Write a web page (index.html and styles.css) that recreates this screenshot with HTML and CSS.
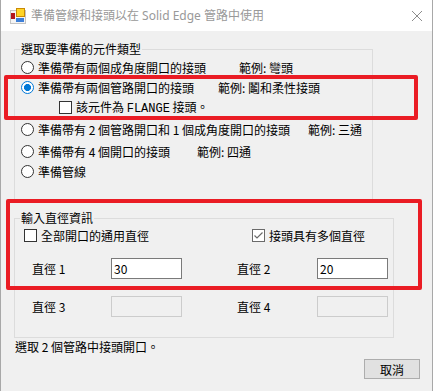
FILE: index.html
```html
<!DOCTYPE html>
<html>
<head>
    <meta charset="utf-8">
    <title>準備管線和接頭以在 Solid Edge 管路中使用</title>
    <link rel="stylesheet" href="styles.css">
</head>
<body>
    <div class="window">
        <div class="titlebar">
            <svg class="app-icon" width="16" height="16" viewBox="0 0 16 16">
                <rect x="0.5" y="2.5" width="15" height="13" fill="#f4f4f4" stroke="#c4c4c4"/>
                <rect x="1" y="5" width="4" height="6" fill="#b3161d"/>
                <rect x="6.5" y="0.5" width="8" height="8" fill="#ffd427" stroke="#c98a05"/>
                <rect x="6" y="10" width="8" height="4" fill="#3d7fd8"/>
            </svg>
            <span class="title">準備管線和接頭以在 Solid Edge 管路中使用</span>
            <svg class="close" width="10" height="10" viewBox="0 0 10 10">
                <path d="M0 0 L10 10 M10 0 L0 10" stroke="#8c8c8c" stroke-width="1"/>
            </svg>
        </div>

        <div class="client">
            <fieldset class="group group-type">
                <legend>選取要準備的元件類型</legend>

                <div class="option">
                    <span class="radio"></span>
                    <span class="label w-angle">準備帶有兩個成角度開口的接頭</span>
                    <span>範例: 彎頭</span>
                </div>
                <div class="option">
                    <span class="radio on"></span>
                    <span class="label w-inline">準備帶有兩個管路開口的接頭</span>
                    <span>範例: 鬮和柔性接頭</span>
                </div>
                <div class="option sub">
                    <span class="check"></span>
                    <span>該元件為 <span class="mono">FLANGE</span> 接頭。</span>
                </div>
                <div class="option spaced">
                    <span class="radio"></span>
                    <span class="label w-tee">準備帶有 2 個管路開口和 1 個成角度開口的接頭</span>
                    <span>範例: 三通</span>
                </div>
                <div class="option spaced">
                    <span class="radio"></span>
                    <span class="label w-cross">準備帶有 4 個開口的接頭</span>
                    <span>範例: 四通</span>
                </div>
                <div class="option">
                    <span class="radio"></span>
                    <span>準備管線</span>
                </div>
            </fieldset>

            <fieldset class="group group-dia">
                <legend>輸入直徑資訊</legend>

                <div class="check-row">
                    <div class="item first">
                        <span class="check"></span>
                        <span>全部開口的通用直徑</span>
                    </div>
                    <div class="item">
                        <span class="check on">
                            <svg width="11" height="11" viewBox="0 0 11 11">
                                <path d="M1.5 5.5 L4 8 L9.5 2.5" fill="none" stroke="#6a6a6a" stroke-width="1.2"/>
                            </svg>
                        </span>
                        <span>接頭具有多個直徑</span>
                    </div>
                </div>

                <div class="dia-row">
                    <span class="dia-label">直徑 1</span>
                    <input class="dia-input" type="text" value="30">
                    <span class="dia-label second">直徑 2</span>
                    <input class="dia-input" type="text" value="20">
                </div>
                <div class="dia-row">
                    <span class="dia-label">直徑 3</span>
                    <input class="dia-input" type="text" disabled>
                    <span class="dia-label second">直徑 4</span>
                    <input class="dia-input" type="text" disabled>
                </div>
            </fieldset>

            <p class="status">選取 2 個管路中接頭開口。</p>

            <div class="actions">
                <button type="button">取消</button>
            </div>
        </div>

        <!-- annotation frames -->
        <div class="mark mark-type"></div>
        <div class="mark mark-dia"></div>
    </div>
</body>
</html>
```

FILE: styles.css
```css
* {
    box-sizing: border-box;
}

body {
    margin: 0;
    font-family: "Noto Sans CJK TC", "Noto Sans", sans-serif;
    font-size: 12px;
    color: #000;
    background-color: #f0f0f0;
}

.window {
    position: relative;
    width: 433px;
    height: 391px;
    background-color: #f0f0f0;
    border-left: 1px solid #a8a8a8;
    border-right: 1px solid #a8a8a8;
}

.titlebar {
    display: flex;
    align-items: center;
    height: 31px;
    padding: 0 10px 0 9px;
    background-color: #fff;
}

.app-icon {
    flex: none;
}

.title {
    flex: 1;
    margin-left: 5px;
    color: #999;
    font-family: "Noto Sans", "Noto Sans CJK TC", sans-serif;
    font-size: 12px;
    line-height: 16px;
}

.close {
    flex: none;
}

.client {
    padding: 0 12px 0 13px;
}

.group {
    margin: 0;
    padding: 0;
    min-width: 0;
    border: 1px solid #dcdcdc;
}

.group legend {
    margin-left: 5px;
    padding: 0 1px;
    line-height: 16px;
}

.group-type {
    width: 359px;
    margin-top: 10px;
    padding: 0 0 19px;
}

.group-dia {
    width: 380px;
    margin-top: 9px;
    padding: 0 0 20px;
}

.option {
    display: flex;
    align-items: center;
    height: 20px;
    padding-left: 6px;
    white-space: nowrap;
}

.option.sub {
    padding-left: 44px;
}

.option.spaced {
    margin-top: 2px;
}

.radio {
    flex: none;
    width: 13px;
    height: 13px;
    margin-right: 4px;
    border: 1px solid #333;
    border-radius: 50%;
    background-color: #fff;
}

.radio.on {
    border-color: #0078d7;
    background: radial-gradient(circle, #0078d7 0 3.2px, #fff 3.8px);
}

.check {
    flex: none;
    display: flex;
    align-items: center;
    justify-content: center;
    width: 13px;
    height: 13px;
    margin-right: 4px;
    border: 1px solid #333;
    background-color: #fff;
}

.check.on {
    border-color: #6a6a6a;
}

.label {
    display: inline-block;
}

.w-angle {
    width: 201px;
}

.w-inline {
    width: 180px;
}

.w-tee {
    width: 270px;
}

.w-cross {
    width: 159px;
}

.mono {
    font-family: "Liberation Mono", monospace;
    font-size: 12px;
}

.check-row {
    display: flex;
    align-items: center;
    height: 18px;
    padding-left: 9px;
}

.check-row .item {
    display: flex;
    align-items: center;
}

.check-row .item.first {
    width: 228px;
}

.dia-row {
    display: flex;
    align-items: center;
    margin-top: 14px;
    padding-left: 17px;
}

.dia-row + .dia-row {
    margin-top: 17px;
}

.dia-label {
    width: 79px;
}

.dia-label.second {
    width: 80px;
    margin-left: 55px;
}

.dia-input {
    width: 71px;
    height: 21px;
    margin: 0;
    padding: 0 2px;
    border: 1px solid #7a7a7a;
    background-color: #fff;
    font-family: "Noto Sans CJK TC", sans-serif;
    font-size: 12px;
    color: #000;
    outline: none;
}

.dia-input:disabled {
    border-color: #ccc;
    background-color: #f0f0f0;
}

.status {
    margin: 0;
    padding-left: 1px;
    line-height: 18px;
}

.actions {
    display: flex;
    justify-content: flex-end;
    margin-top: 3px;
}

button {
    width: 56px;
    height: 20px;
    padding: 0;
    border: 1px solid #adadad;
    background-color: #e1e1e1;
    font-family: "Noto Sans CJK TC", sans-serif;
    font-size: 12px;
    color: #000;
}

.mark {
    position: absolute;
    border: 4px solid #ea1c24;
    border-radius: 2px;
}

.mark-type {
    left: 3px;
    top: 75px;
    width: 414px;
    height: 45px;
}

.mark-dia {
    left: 5px;
    top: 199px;
    width: 416px;
    height: 91px;
}
```
